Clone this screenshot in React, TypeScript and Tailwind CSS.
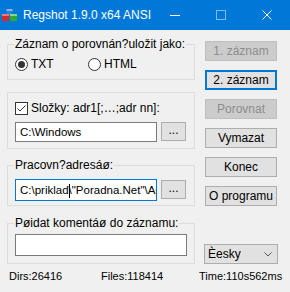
import React from 'react'

const font = { fontFamily: '"Segoe UI", "Liberation Sans", Arial, sans-serif' }

function AppIcon() {
  return (
    <svg width="15" height="12" viewBox="0 0 15 12">
      <rect x="4.5" y="0" width="6" height="6" fill="#2f7fd6" />
      <rect x="4.5" y="0" width="6" height="2" fill="#7fb6f0" />
      <rect x="0" y="5" width="7" height="7" fill="#d42a2a" />
      <rect x="0" y="5" width="7" height="2" fill="#f07a7a" />
      <rect x="8" y="5" width="7" height="7" fill="#2fa83a" />
      <rect x="8" y="5" width="7" height="2" fill="#7fd886" />
    </svg>
  )
}

function TitleBar() {
  return (
    <div className="h-[30px] bg-[#0078d7] flex items-center text-white">
      <div className="ml-[2px] w-[15px] flex items-center">
        <AppIcon />
      </div>
      <span className="ml-[6px] text-[12px] leading-none">Regshot 1.9.0 x64 ANSI</span>
      <div className="ml-auto flex h-full">
        <div className="w-[46px] flex items-center justify-center">
          <div className="w-[10px] h-px bg-white" />
        </div>
        <div className="w-[46px] flex items-center justify-center">
          <div className="w-[10px] h-[10px] border border-white/50" />
        </div>
        <div className="w-[46px] flex items-center justify-center">
          <svg width="10" height="10" viewBox="0 0 10 10">
            <path d="M0.5 0.5 L9.5 9.5 M9.5 0.5 L0.5 9.5" stroke="#fff" strokeWidth="1" />
          </svg>
        </div>
      </div>
    </div>
  )
}

function Radio({ checked, label }: { checked?: boolean; label: string }) {
  return (
    <div className="flex items-center">
      <div className="w-[13px] h-[13px] rounded-full border border-[#333] bg-white flex items-center justify-center">
        {checked && <div className="w-[7px] h-[7px] rounded-full bg-[#333]" />}
      </div>
      <span className="ml-[3px]">{label}</span>
    </div>
  )
}

function Btn({ label, disabled, primary }: { label: string; disabled?: boolean; primary?: boolean }) {
  const cls = disabled
    ? 'bg-[#cccccc] border border-[#bfbfbf] text-[#8d8d8d]'
    : primary
      ? 'bg-[#e1e1e1] border-2 border-[#0078d7] text-black'
      : 'bg-[#e1e1e1] border border-[#adadad] text-black'
  return (
    <div className={`h-[20px] w-[72px] flex items-center justify-center ${cls}`}>{label}</div>
  )
}

function Browse() {
  return (
    <div className="ml-[4px] w-[25px] h-[19px] bg-[#e1e1e1] border border-[#adadad] flex items-center justify-center leading-none pb-[3px]">
      ...
    </div>
  )
}

export default function App() {
  return (
    <div className="w-[290px] h-[292px] bg-[#f0f0f0] text-[12px] text-black overflow-hidden" style={font}>
      <TitleBar />
      <div className="flex">
        <div className="ml-[7px] w-[188px]">
          <fieldset className="mt-[6px] h-[44px] border border-[#dcdcdc]">
            <legend className="ml-[6px] px-[1px] leading-[16px]">Záznam o porovnán?uložit jako:</legend>
            <div className="flex pt-[5px] pl-[7px] leading-[14px]">
              <div className="w-[73px]">
                <Radio checked label="TXT" />
              </div>
              <Radio label="HTML" />
            </div>
          </fieldset>

          <div className="mt-[12px] h-[57px] border border-[#dcdcdc] pt-[9px] pl-[7px]">
            <div className="flex items-center leading-[13px]">
              <div className="w-[13px] h-[13px] border border-[#333] bg-white flex items-center justify-center">
                <svg width="11" height="11" viewBox="0 0 11 11">
                  <path d="M1.5 5.5 L4 8 L9.5 2.5" fill="none" stroke="#333" strokeWidth="1" />
                </svg>
              </div>
              <span className="ml-[3px]">Složky: adr1[;…;adr nn]:</span>
            </div>
            <div className="mt-[7px] flex items-start">
              <div className="w-[142px] h-[20px] bg-white border border-[#7a7a7a] pl-[4px] leading-[18px] text-[11.5px]">C:\Windows</div>
              <Browse />
            </div>
          </div>

          <fieldset className="mt-[8px] h-[49px] border border-[#dcdcdc]">
            <legend className="ml-[6px] px-[1px] leading-[16px]">Pracovn?adresáø:</legend>
            <div className="pt-[6px] pl-[7px] flex items-start">
              <div className="w-[142px] h-[22px] bg-white border border-[#0078d7] pl-[4px] leading-[20px] text-[11.5px] whitespace-nowrap overflow-hidden">
                C:\priklad<span className="inline-block w-px h-[14px] bg-black align-middle -mr-px" />\"Poradna.Net"\Ap
              </div>
              <div className="mt-[1px]">
                <Browse />
              </div>
            </div>
          </fieldset>

          <fieldset className="mt-[9px] h-[49px] border border-[#dcdcdc]">
            <legend className="ml-[6px] px-[1px] leading-[16px]">Pøidat komentáø do záznamu:</legend>
            <div className="pt-[3px] pl-[7px]">
              <div className="w-[172px] h-[22px] bg-white border border-[#7a7a7a]" />
            </div>
          </fieldset>
        </div>

        <div className="ml-[10px] w-[72px] pt-[11px] flex flex-col gap-[9px]">
          <Btn label="1. záznam" disabled />
          <Btn label="2. záznam" primary />
          <Btn label="Porovnat" disabled />
          <Btn label="Vymazat" />
          <Btn label="Konec" />
          <Btn label="O programu" />
          <div className="mt-[29px] -ml-[1px] w-[74px] h-[20px] bg-[#e1e1e1] border border-[#adadad] flex items-center pl-[3px] pr-[5px]">
            <span>Èesky</span>
            <svg className="ml-auto" width="8" height="5" viewBox="0 0 8 5">
              <path d="M0.5 0.5 L4 4 L7.5 0.5" fill="none" stroke="#555" strokeWidth="1" />
            </svg>
          </div>
        </div>
      </div>
      <div className="mt-[4px] flex pl-[9px] leading-[16px] text-[11px]">
        <span className="w-[92px]">Dirs:26416</span>
        <span className="w-[98px]">Files:118414</span>
        <span>Time:110s562ms</span>
      </div>
    </div>
  )
}
